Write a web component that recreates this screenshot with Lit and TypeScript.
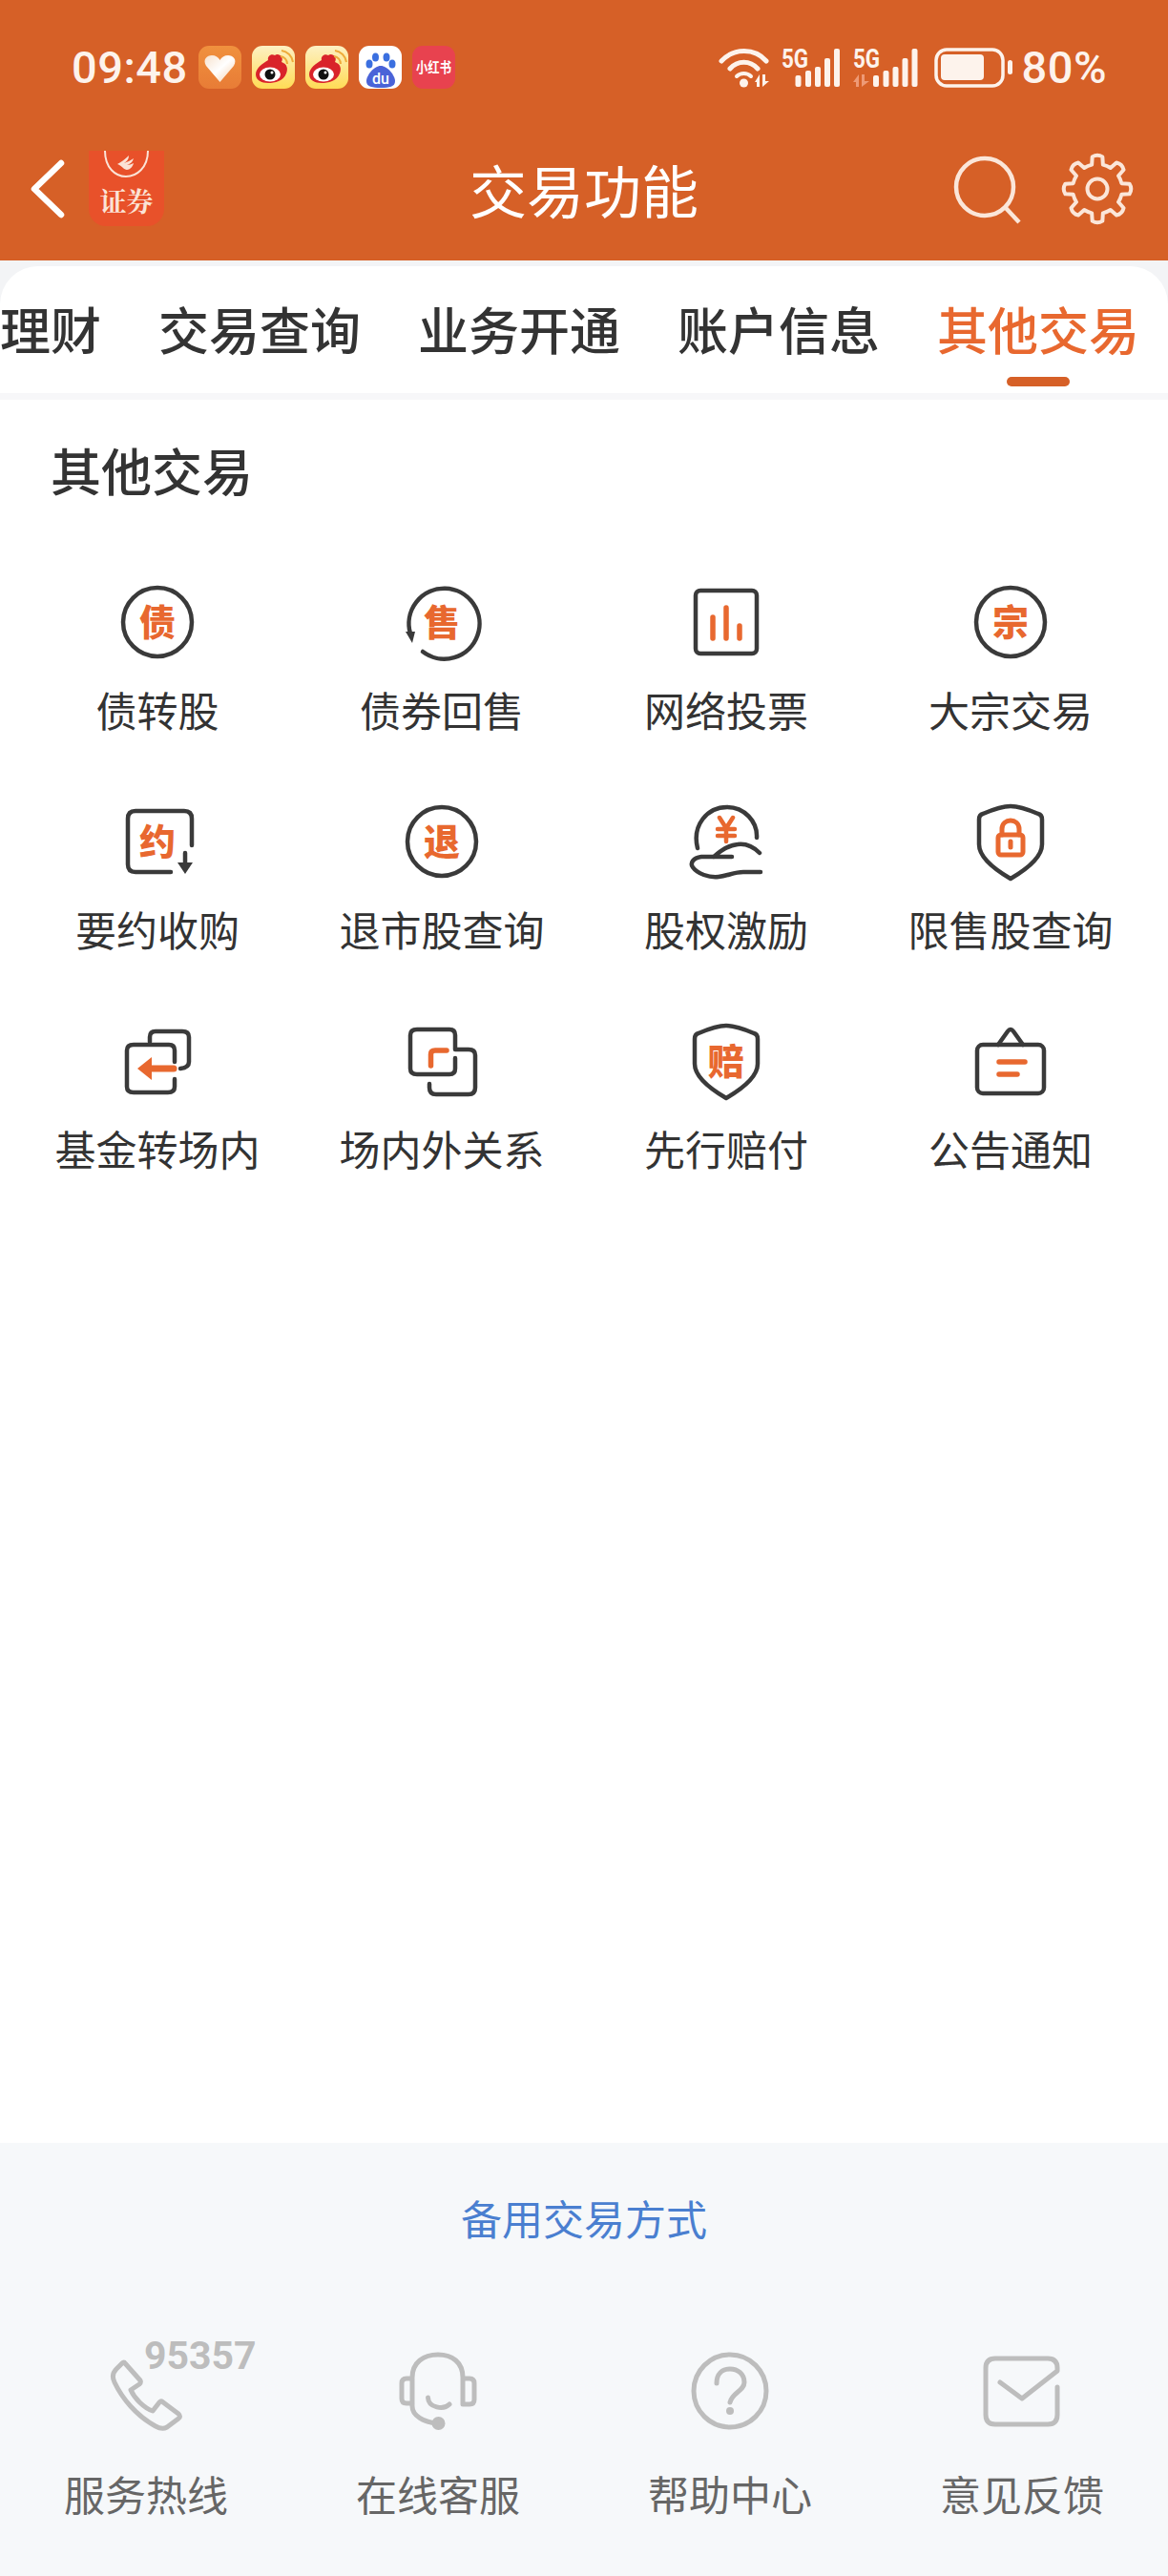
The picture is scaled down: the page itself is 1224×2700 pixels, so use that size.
import { LitElement, html, svg, css } from "lit";
import { customElement } from "lit/decorators.js";

const shield = "M50 13C58 13 72 18 79 21Q83 22 83 27L83 53C83 68 62 82 50 89C38 82 17 68 17 53L17 27Q17 22 21 21C28 18 42 13 50 13Z";

const charCircle = (c: string) =>
  html`<svg class="ic" width="100" height="100" viewBox="0 0 100 100"><circle class="d" cx="50" cy="50" r="36"/><text class="g" x="50" y="64">${c}</text></svg>`;

const gridItems: { label: string; icon: unknown }[] = [
  { label: "债转股", icon: charCircle("债") },
  {
    label: "债券回售",
    icon: html`<svg class="ic" width="100" height="100" viewBox="0 0 100 100"><path class="d" d="M30 81A37 37 0 1 0 17 62"/><path class="df" d="M12 60L22 60L19 72Z"/><text class="g" x="50" y="64">售</text></svg>`,
  },
  {
    label: "网络投票",
    icon: html`<svg class="ic" width="100" height="100" viewBox="0 0 100 100"><rect class="d" x="18" y="17" width="64" height="66" rx="5"/><path class="o" d="M36 45V67M50 35V67M64 54V67"/></svg>`,
  },
  { label: "大宗交易", icon: charCircle("宗") },
  {
    label: "要约收购",
    icon: html`<svg class="ic" width="100" height="100" viewBox="0 0 100 100"><path class="d" d="M86 54V26Q86 18 78 18H27Q19 18 19 26V74Q19 82 27 82H64"/><path class="d" d="M79 62V76"/><path class="df" d="M71 72H87L79 84Z"/><text class="g" x="50" y="64">约</text></svg>`,
  },
  { label: "退市股查询", icon: charCircle("退") },
  {
    label: "股权激励",
    icon: html`<svg class="ic" width="100" height="100" viewBox="0 0 100 100"><path class="d" d="M20 57C14 33 30 14 51 14C69 14 83 29 82 46"/><path class="o2" d="M43 25L50 36L57 25M41 37H59M41 44H59M50 36V50"/><path class="d" d="M85 62C78 55 70 52 62 53C52 54 45 59 37 66M56 66H24C15 67 12 73 15 77C20 84 32 88 42 87C52 86 58 82 68 82H86"/></svg>`,
  },
  {
    label: "限售股查询",
    icon: html`<svg class="ic" width="100" height="100" viewBox="0 0 100 100"><path class="d" d="${shield}"/><rect class="o3" x="37" y="43" width="26" height="21" rx="3"/><path class="o3" d="M41 43V37C41 25 59 25 59 37V43"/><path class="o3" d="M50 50V56"/></svg>`,
  },
  {
    label: "基金转场内",
    icon: html`<svg class="ic" width="100" height="100" viewBox="0 0 100 100"><path class="d" d="M42 30V25Q42 19 48 19H76Q83 19 83 25V51Q83 57 74 58"/><path class="d" d="M68 51V39Q68 33 62 33H25Q18 33 18 39V77Q18 83 25 83H61Q68 83 68 77V69"/><path class="o wide" d="M42 58H67"/><path class="of" d="M29 58L44 46V70Z"/></svg>`,
  },
  {
    label: "场内外关系",
    icon: html`<svg class="ic" width="100" height="100" viewBox="0 0 100 100"><path class="d" d="M64 47V58Q64 64 58 64H24Q17 64 17 58V23Q17 17 24 17H58Q64 17 64 23V38H78Q85 38 85 44V78Q85 85 78 85H44Q37 85 37 78V74"/><path class="o" d="M38.500 55V43Q38.500 39 43 39H55"/></svg>`,
  },
  {
    label: "先行赔付",
    icon: html`<svg class="ic" width="100" height="100" viewBox="0 0 100 100"><path class="d" d="${shield}"/><text class="g" x="50" y="64">赔</text></svg>`,
  },
  {
    label: "公告通知",
    icon: html`<svg class="ic" width="100" height="100" viewBox="0 0 100 100"><rect class="d" x="15" y="33" width="70" height="51" rx="6"/><path class="d" d="M37 33L47 19Q50 15 53 19L63 33"/><path class="o" d="M38 51H65M38 64H57"/></svg>`,
  },
];

const footerItems: { label: string; icon: unknown; badge?: string }[] = [
  {
    label: "服务热线",
    badge: "95357",
    icon: html`<svg class="ic" width="100" height="100" viewBox="0 0 100 100"><path class="l" d="M28 21L44 39Q45 41 43 43L34 49C38 58 48 68 57 71L64 62Q66 60 68 62L84 74Q87 77 84 79L72 88Q67 91 60 87C40 76 25 58 17 41Q13 33 19 27L25 21Q27 19 28 21Z"/></svg>`,
  },
  {
    label: "在线客服",
    icon: html`<svg class="ic" width="100" height="100" viewBox="0 0 100 100"><path class="l" d="M23 66V36C23 20 35 12 50 12C65 12 76 20 76 36V64H83Q88 64 88 59V42Q88 37 83 37H76M23 37H17Q12 37 12 42V58Q12 63 17 63H23M23 66C23 76 35 83 50 84M39.500 57C40 68 56 70 62 64"/><circle class="lf" cx="50.500" cy="84" r="7"/></svg>`,
  },
  {
    label: "帮助中心",
    icon: html`<svg class="ic" width="100" height="100" viewBox="0 0 100 100"><circle class="l" cx="50" cy="50" r="38"/><path class="l" d="M36 42C36 32 42 27 50 27C58 27 65 32 65 41C65 50 52 52 50 62"/><circle class="lf" cx="50" cy="71" r="4"/></svg>`,
  },
  {
    label: "意见反馈",
    icon: html`<svg class="ic" width="100" height="100" viewBox="0 0 100 100"><path class="l" d="M87 46V75Q87 85 77 85H22Q12 85 12 75V26Q12 16 22 16H77Q87 16 87 26V29L50 58L27 41"/></svg>`,
  },
];

function gearPath(cx: number, cy: number, ro: number, ri: number): string {
  const n = 8;
  const pt = (r: number, a: number) => {
    const t = ((a - 90) * Math.PI) / 180;
    return `${(cx + r * Math.cos(t)).toFixed(2)} ${(cy + r * Math.sin(t)).toFixed(2)}`;
  };
  let d = "";
  for (let i = 0; i < n; i++) {
    const a = (i * 360) / n;
    const step = i === 0 ? "M" : "L";
    d += `${step}${pt(ri, a - 13)} L${pt(ro - 2, a - 9)} Q${pt(ro + 1, a)} ${pt(ro - 2, a + 9)} L${pt(ri, a + 13)} `;
    d += `A${ri} ${ri} 0 0 1 ${pt(ri, a + 32)} `;
  }
  return d + "Z";
}

const tabs = ["理财", "交易查询", "业务开通", "账户信息", "其他交易"];

@customElement("app-root")
export class AppRoot extends LitElement {
  static styles = css`
    :host {
      display: flex;
      flex-direction: column;
      width: 1224px;
      height: 2700px;
      background: #fff;
      color: #333;
      font-family: "Noto Sans CJK SC", "Noto Sans", sans-serif;
      overflow: hidden;
    }
    .header {
      height: 273px;
      flex: none;
      background: #d66027;
      color: #fdf3ec;
      box-sizing: border-box;
    }
    .status {
      height: 93px;
      box-sizing: border-box;
      padding: 48px 64px 0 75px;
      display: flex;
      align-items: center;
    }
    .time,
    .pct {
      font-family: Roboto, "Liberation Sans", sans-serif;
      font-weight: 500;
      font-size: 47px;
      line-height: 45px;
      letter-spacing: 0.5px;
    }
    .time {
      width: 133px;
    }
    .notes {
      display: flex;
      gap: 11px;
    }
    .notes svg {
      display: block;
    }
    .sys {
      margin-left: auto;
      display: flex;
      align-items: center;
      gap: 8px;
    }
    .sys svg {
      display: block;
    }
    .nav {
      margin-top: 65px;
      height: 79px;
      display: grid;
      grid-template-columns: 1fr auto 1fr;
      align-items: center;
      padding: 0 36px;
    }
    .nav-left {
      display: flex;
      align-items: center;
      gap: 21px;
    }
    .back {
      margin-left: -8px;
    }
    .nav-right {
      display: flex;
      align-items: center;
      justify-content: flex-end;
      gap: 40px;
    }
    .nav svg {
      display: block;
    }
    .title {
      font-size: 60px;
      line-height: 79px;
      font-weight: 400;
      color: #fff;
    }
    .app-icon {
      width: 79px;
      height: 79px;
      border-radius: 0 0 18px 18px;
      background: #e8512a;
    }
    .sheet {
      flex: 1;
      display: flex;
      flex-direction: column;
      background: #f3f4f6;
      padding-top: 6px;
      min-height: 0;
    }
    .tabs {
      height: 133px;
      flex: none;
      background: #fff;
      border-radius: 40px 40px 0 0;
      display: flex;
      gap: 60px;
      overflow: hidden;
    }
    .tab {
      position: relative;
      flex: none;
      font-size: 53px;
      font-weight: 500;
      line-height: 131px;
      height: 133px;
      color: #333;
    }
    .tab.on {
      color: #e8682f;
    }
    .tab.on::after {
      content: "";
      position: absolute;
      left: 50%;
      bottom: 7px;
      width: 66px;
      height: 10px;
      margin-left: -33px;
      border-radius: 5px;
      background: #d66027;
    }
    .sep {
      height: 7px;
      flex: none;
      background: #f7f7f9;
    }
    .body {
      flex: 1;
      background: #fff;
      padding: 37px 16px 0;
    }
    .sec {
      font-size: 53px;
      font-weight: 500;
      line-height: 72px;
      padding-left: 37px;
    }
    .grid {
      margin-top: 74px;
      display: grid;
      grid-template-columns: repeat(4, 298px);
      grid-auto-rows: 230px;
    }
    .cell {
      display: flex;
      flex-direction: column;
      align-items: center;
    }
    .ic {
      display: block;
      flex: none;
    }
    .cell span {
      margin-top: 11px;
      font-size: 43px;
      line-height: 60px;
      color: #333;
      white-space: nowrap;
    }
    .d,
    .l,
    .o,
    .o2,
    .o3 {
      fill: none;
      stroke-linecap: round;
      stroke-linejoin: round;
    }
    .d {
      stroke: #3a3a3a;
      stroke-width: 4.5;
    }
    .df {
      fill: #3a3a3a;
    }
    .o {
      stroke: #e8682f;
      stroke-width: 5.5;
    }
    .o.wide {
      stroke-width: 7;
    }
    .o2 {
      stroke: #e8682f;
      stroke-width: 4.5;
    }
    .o3 {
      stroke: #e8682f;
      stroke-width: 5;
    }
    .of {
      fill: #e8682f;
    }
    .l {
      stroke: #bdbdbd;
      stroke-width: 5;
    }
    .lf {
      fill: #bdbdbd;
    }
    .g {
      fill: #e8682f;
      font-family: "Noto Sans CJK SC", sans-serif;
      font-weight: 900;
      font-size: 38px;
      text-anchor: middle;
    }
    .footer {
      height: 454px;
      flex: none;
      box-sizing: border-box;
      background: #f6f8fa;
      padding-top: 48px;
    }
    .link {
      text-align: center;
      font-size: 43px;
      line-height: 60px;
      color: #4a7fd0;
    }
    .foot-row {
      margin-top: 102px;
      display: grid;
      grid-template-columns: repeat(4, 306px);
    }
    .foot-cell {
      display: flex;
      flex-direction: column;
      align-items: center;
    }
    .foot-cell span.lab {
      margin-top: 27px;
      font-size: 43px;
      line-height: 60px;
      color: #666;
    }
    .ic-wrap {
      position: relative;
      width: 100px;
      height: 100px;
    }
    .badge {
      position: absolute;
      left: 48px;
      top: -2px;
      font-family: Roboto, "Liberation Sans", sans-serif;
      font-weight: 700;
      font-size: 41px;
      line-height: 30px;
      color: #bdbdbd;
    }
    .s5 {
      font-family: Roboto, sans-serif;
      font-weight: 700;
      font-size: 28px;
      fill: #fdf3ec;
    }
    .bt {
      font-family: "Noto Sans CJK SC", sans-serif;
      font-weight: 700;
    }
    .bs {
      font-family: "Noto Serif CJK SC", "Noto Sans CJK SC", serif;
      font-weight: 700;
    }
  `;

  private notes() {
    const weibo = (id: string) => html`<svg width="45" height="45" viewBox="0 0 45 45">
      <defs><linearGradient id="${id}" x1="0" y1="0" x2="0" y2="1"><stop offset="0" stop-color="#fdf1c4"/><stop offset="1" stop-color="#ffdb55"/></linearGradient></defs>
      <rect width="45" height="45" rx="11" fill="url(#${id})"/>
      <path d="M4 30C4 23 12 18 17 15C16 11 20 8 24 10C28 7 34 12 31 17C37 19 38 24 36 29C33 37 24 39 17 39C10 39 4 36 4 30Z" fill="#d9232a"/>
      <ellipse cx="19" cy="30" rx="11" ry="7.500" fill="#fff"/>
      <circle cx="19" cy="30" r="5.500" fill="#111"/>
      <circle cx="21" cy="28" r="1.500" fill="#fff"/>
      <path d="M30 11A8 8 0 0 1 37 19M31 5A14 14 0 0 1 43 17" fill="none" stroke="#eeab3a" stroke-width="2"/>
    </svg>`;
    return html`<div class="notes">
      <svg width="45" height="45" viewBox="0 0 45 45">
        <defs>
          <linearGradient id="hb" x1="0" y1="0" x2="0" y2="1"><stop offset="0" stop-color="#f0913e"/><stop offset="1" stop-color="#e87c36"/></linearGradient>
          <linearGradient id="hh" x1="0" y1="0" x2="1" y2="1"><stop offset="0" stop-color="#f8e2cd"/><stop offset=".5" stop-color="#fff"/><stop offset="1" stop-color="#f6cfa8"/></linearGradient>
        </defs>
        <rect width="45" height="45" rx="11" fill="url(#hb)"/>
        <path d="M22.500 38L8 21C4 14 9 10 14 10C18 10 21 12 22.500 15C24 12 27 10 31 10C36 10 41 14 37 21Z" fill="url(#hh)"/>
      </svg>
      ${weibo("wb1")} ${weibo("wb2")}
      <svg width="45" height="45" viewBox="0 0 45 45">
        <rect width="45" height="45" rx="11" fill="#fff"/>
        <ellipse cx="17.500" cy="12" rx="3.500" ry="4.500" fill="#3a6fe0"/>
        <ellipse cx="29" cy="12" rx="3.500" ry="4.500" fill="#3a6fe0"/>
        <ellipse cx="11" cy="19" rx="3.500" ry="4.500" fill="#3a6fe0"/>
        <ellipse cx="35" cy="19" rx="3.500" ry="4.500" fill="#3a6fe0"/>
        <path d="M23 21C30 21 38 31 38 37C38 43 32 44 23 44C14 44 8 43 8 37C8 31 16 21 23 21Z" fill="#4a63d8"/>
        <text x="23" y="40" text-anchor="middle" font-size="16" font-family="Roboto, sans-serif" font-weight="500" fill="#fff">du</text>
      </svg>
      <svg width="45" height="45" viewBox="0 0 45 45">
        <rect width="45" height="45" rx="11" fill="#e8424f"/>
        <text class="bt" transform="translate(22.500 28) scale(.82 1)" text-anchor="middle" font-size="15" fill="#fff">小红书</text>
      </svg>
    </div>`;
  }

  private sys() {
    const bars = (x0: number) => {
      const xs = [0, 10.5, 20.5, 30.5, 40.5];
      const tops = [29, 24, 20, 11, 1];
      return xs.map((x, i) => svg`<rect x="${x0 + x}" y="${tops[i]}" width="6" height="${41 - tops[i]}" rx="2" fill="#fdf3ec"/>`);
    };
    return html`<div class="sys">
      <svg width="309" height="62" viewBox="0 -10 309 62">
        <g fill="none" stroke="#fdf3ec" stroke-width="5" stroke-linecap="round">
          <path d="M3 14C16 0 38 0 50 14"/>
          <path d="M12 22C20 13 33 13 41 22" />
          <path d="M19 30C23 26 30 26 34 30" stroke-width="4"/>
        </g>
        <circle cx="26.500" cy="37" r="4.500" fill="#fdf3ec"/>
        <path d="M38 36L43 28V41H40V36ZM46 28H49V35H53L46 41Z" fill="#fdf3ec"/>
        <text class="s5" transform="translate(66 21) scale(.8 1)">5G</text>
        ${bars(80.5)}
        <text class="s5" transform="translate(141 21) scale(.8 1)">5G</text>
        <path d="M141 36L147 28V41H144V36ZM150 28H153V35H158L150 41Z" fill="#ee9a76"/>
        ${bars(162)}
        <rect x="228" y="2" width="70" height="38" rx="11" fill="none" stroke="#fdf3ec" stroke-width="3.500"/>
        <rect x="233" y="7" width="45" height="27" rx="4" fill="#fdf3ec"/>
        <rect x="303" y="13" width="5" height="15" rx="2.500" fill="#fdf3ec"/>
      </svg>
      <div class="pct">80%</div>
    </div>`;
  }

  private nav() {
    return html`<div class="nav">
      <div class="nav-left">
        <svg class="back" width="44" height="66" viewBox="0 0 44 66"><path d="M36 6L8 33L36 60" fill="none" stroke="#fff" stroke-width="6.500" stroke-linecap="round" stroke-linejoin="round"/></svg>
        <svg class="app-icon" viewBox="0 0 79 79">
          <path d="M17 0C17 18 28 27 39 27C50 27 62 18 62 0" fill="none" stroke="#fbe3d6" stroke-width="2"/>
          <path d="M30 14C34 12 38 9 42 5C42 9 40 11 37 13C40 12 44 10 47 8C46 12 43 14 40 15C42 15 45 14 47 13C46 17 43 20 40 20C37 20 35 16 30 14Z" fill="#fbe3d6"/>
          <text class="bs" x="39.500" y="64" text-anchor="middle" font-size="28" fill="#fbe3d6">证券</text>
        </svg>
      </div>
      <div class="title">交易功能</div>
      <div class="nav-right">
        <svg width="76" height="76" viewBox="0 0 76 76"><circle cx="36" cy="36" r="30" fill="none" stroke="#fbe6d9" stroke-width="4.500"/><path d="M58 58L72 73" fill="none" stroke="#fbe6d9" stroke-width="4.500"/></svg>
        <svg width="76" height="78" viewBox="0 0 76 78"><path d="${gearPath(38, 39, 36, 26)}" fill="none" stroke="#fbe6d9" stroke-width="4" stroke-linejoin="round"/><circle cx="38" cy="39" r="10.500" fill="none" stroke="#fbe6d9" stroke-width="4"/></svg>
      </div>
    </div>`;
  }

  render() {
    return html`
      <div class="header">
        <div class="status">
          <div class="time">09:48</div>
          ${this.notes()} ${this.sys()}
        </div>
        ${this.nav()}
      </div>
      <div class="sheet">
        <div class="tabs">
          ${tabs.map((t, i) => html`<div class="tab ${i === tabs.length - 1 ? "on" : ""}">${t}</div>`)}
        </div>
        <div class="sep"></div>
        <div class="body">
          <div class="sec">其他交易</div>
          <div class="grid">
            ${gridItems.map((it) => html`<div class="cell">${it.icon}<span>${it.label}</span></div>`)}
          </div>
        </div>
      </div>
      <div class="footer">
        <div class="link">备用交易方式</div>
        <div class="foot-row">
          ${footerItems.map(
            (it) => html`<div class="foot-cell">
              <div class="ic-wrap">${it.icon}${it.badge ? html`<div class="badge">${it.badge}</div>` : ""}</div>
              <span class="lab">${it.label}</span>
            </div>`
          )}
        </div>
      </div>
    `;
  }
}
